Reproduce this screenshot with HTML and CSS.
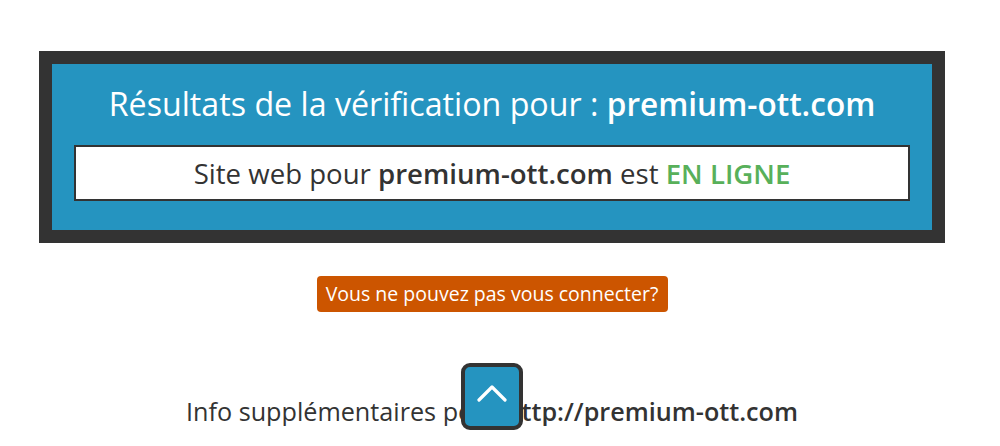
FILE: index.html
```html
<!DOCTYPE html>
<html lang="fr">
<head>
<meta charset="utf-8">
<title>Résultats de la vérification</title>
<link rel="stylesheet" href="styles.css">
</head>
<body>
<main class="page">
  <section class="result">
    <h1 class="result-title">Résultats de la vérification pour : <strong>premium-ott.com</strong></h1>
    <div class="status">Site web pour <strong>premium-ott.com</strong> est <span class="online">EN LIGNE</span></div>
  </section>
  <div class="help">
    <a class="help-btn" href="#">Vous ne pouvez pas vous connecter?</a>
  </div>
  <p class="info">Info supplémentaires pour <strong>http://premium-ott.com</strong></p>
</main>
<a class="to-top" href="#" aria-label="Haut de page">
  <svg width="30" height="18" viewBox="0 0 30 18"><polyline points="2,16 15,3 28,16" fill="none" stroke="#fff" stroke-width="3.2" stroke-linecap="round" stroke-linejoin="round"/></svg>
</a>
</body>
</html>
```
FILE: styles.css
```css
html, body {
  margin: 0;
  padding: 0;
  background: #fff;
}
body {
  font-family: "Open Sans", "Noto Sans", sans-serif;
  color: #333;
  overflow: hidden;
}
.page {
  width: 984px;
  padding-top: 51px;
}
.result {
  margin: 0 39px;
  border: 13px solid #333;
  background: #2594c0;
  padding: 20px 22px 29px;
}
.result-title {
  margin: 0 0 21px;
  font-size: 32.2px;
  line-height: 40px;
  font-weight: 400;
  color: #fff;
  text-align: center;
}
.result-title strong {
  font-weight: 600;
  font-size: 0.98em;
}
.status {
  background: #fff;
  border: 2px solid #333;
  height: 52px;
  line-height: 52px;
  text-align: center;
  font-size: 27.6px;
  color: #333;
}
.status strong {
  font-weight: 600;
}
.online {
  color: #58b05a;
  font-weight: 600;
}
.help {
  display: flex;
  justify-content: center;
  margin-top: 33px;
}
.help-btn {
  display: block;
  width: 351px;
  height: 36px;
  line-height: 36px;
  text-align: center;
  background: #cc5500;
  color: #fff;
  font-size: 19.5px;
  text-decoration: none;
  border-radius: 4px;
}
.info {
  margin: 84px 0 0;
  text-align: center;
  font-size: 25.2px;
  line-height: 30px;
  color: #333;
}
.info strong {
  font-weight: 600;
}
.to-top {
  position: fixed;
  left: 461px;
  top: 363px;
  width: 54px;
  border: 4px solid #333;
  border-radius: 9px;
  background: #2594c0;
  display: flex;
  align-items: center;
  justify-content: center;
  padding-bottom: 8px;
  box-sizing: content-box;
  height: 51px;
}
```
